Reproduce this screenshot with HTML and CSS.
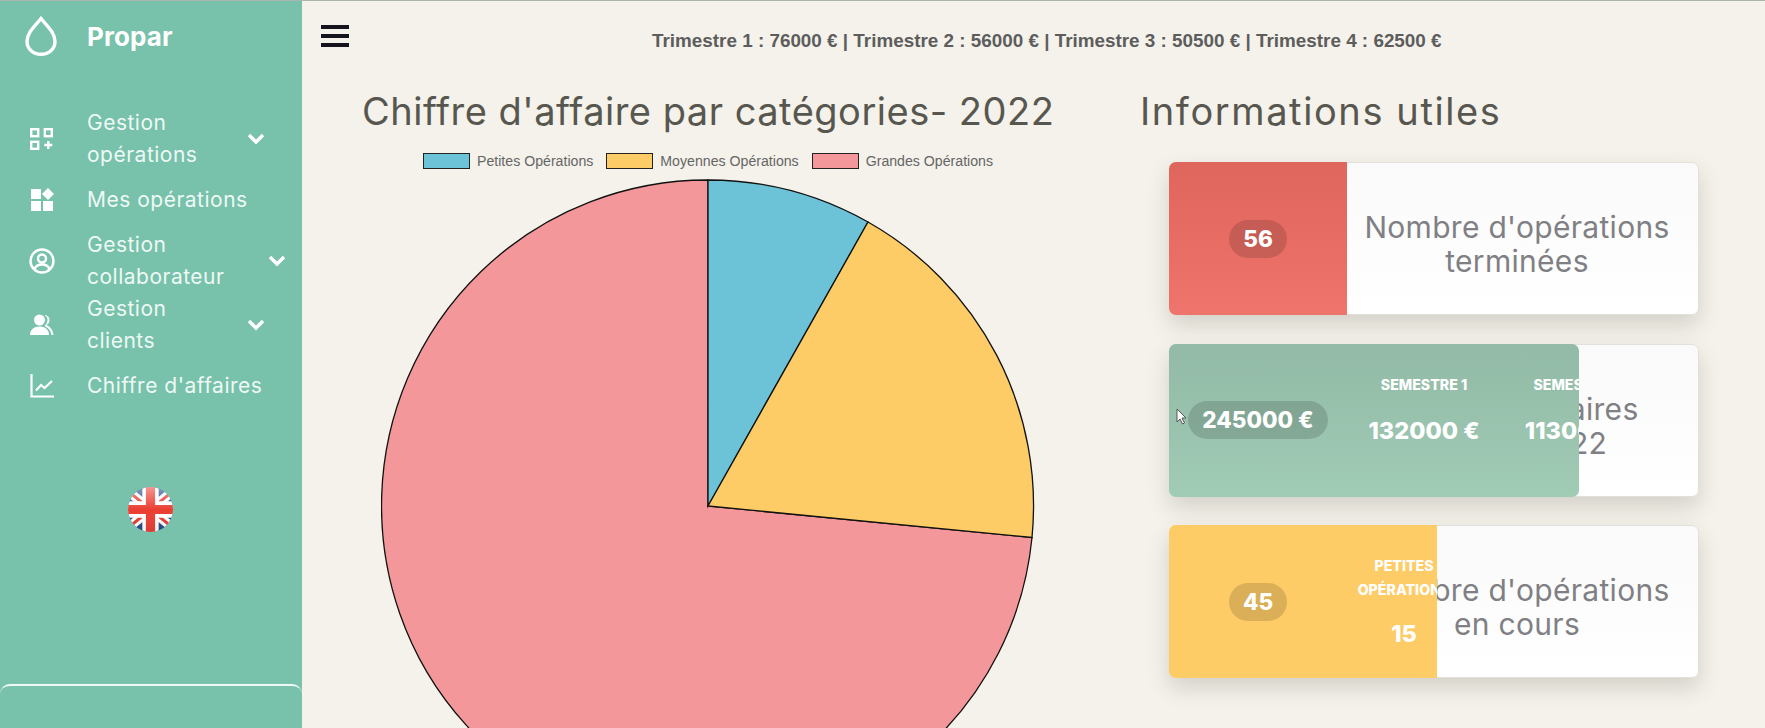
FILE: index.html
```
<!DOCTYPE html>
<html lang="fr">
<head>
<meta charset="utf-8">
<title>Propar</title>
<link rel="stylesheet" href="styles.css">
</head>
<body>
<div class="app">
  <aside class="sidebar">
    <div class="brand">
      <svg class="drop" viewBox="0 0 32 40" fill="none" stroke="#fff" stroke-width="3.4"><path d="M16 2.5C11 9 2 16 2 25.5 2 33 8.3 38.3 16 38.3S30 33 30 25.5C30 16 21 9 16 2.5Z"/></svg>
      <span class="brand-name">Propar</span>
    </div>
    <nav class="nav">
      <a class="item tall first">
        <span class="ico"><svg viewBox="0 0 23 22" width="23" height="22" fill="none" stroke="#fff" stroke-width="2.4"><rect x="1.2" y="1.2" width="7" height="7"/><rect x="14.8" y="1.2" width="7" height="7"/><rect x="1.2" y="13.8" width="7" height="7"/><path d="M18.300 13v8M14.300 17h8"/></svg></span>
        <span class="label">Gestion<br>opérations</span>
        <svg class="chev" viewBox="0 0 18 12" fill="none" stroke="#fff" stroke-width="3.4"><path d="M2 2l7 7 7-7"/></svg>
      </a>
      <a class="item short">
        <span class="ico"><svg viewBox="0 0 24 24" width="24" height="24" fill="#fff"><rect x="1" y="1" width="10" height="10"/><rect x="1" y="13" width="10" height="10"/><rect x="13" y="13" width="10" height="10"/><path d="M18 0l6 6-6 6-6-6z"/></svg></span>
        <span class="label">Mes opérations</span>
      </a>
      <a class="item tall collab">
        <span class="ico"><svg viewBox="0 0 26 26" width="26" height="26" fill="none" stroke="#fff" stroke-width="2.4"><circle cx="13" cy="13" r="11.5"/><circle cx="13" cy="10.5" r="4"/><path d="M5.5 21c1.5-3.5 4.5-4.5 7.5-4.5s6 1 7.5 4.5"/></svg></span>
        <span class="label">Gestion<br>collaborateur</span>
        <svg class="chev" viewBox="0 0 18 12" fill="none" stroke="#fff" stroke-width="3.4"><path d="M2 2l7 7 7-7"/></svg>
      </a>
      <a class="item tall">
        <span class="ico"><svg viewBox="0 0 24 22" width="24" height="22" fill="#fff"><circle cx="9.5" cy="6" r="5.5"/><path d="M0 21c0-5.5 4-8.500 9.500-8.500S19 15.500 19 21z"/><path d="M15 .8c3 .9 4.500 3 4.500 5.200S18.500 10 16.500 11c3.500 1.500 6.500 5 7 10h-2c-.6-4.500-3.500-7.500-7-9 1.800-1.600 3-3.500 3-6s-1-3.700-2.500-4.200z"/></svg></span>
        <span class="label">Gestion<br>clients</span>
        <svg class="chev" viewBox="0 0 18 12" fill="none" stroke="#fff" stroke-width="3.4"><path d="M2 2l7 7 7-7"/></svg>
      </a>
      <a class="item short">
        <span class="ico"><svg viewBox="0 0 24 24" width="24" height="24" fill="none" stroke="#fff" stroke-width="2.2"><path d="M1.500 0v22.500H24"/><path d="M6 16.500l5-5.500 3.500 3L22 7"/></svg></span>
        <span class="label">Chiffre d'affaires</span>
      </a>
    </nav>
    <div class="flag-wrap">
      <svg class="flag" viewBox="0 0 44 44">
        <defs>
          <clipPath id="flagclip"><circle cx="22" cy="22" r="22"/></clipPath>
          <linearGradient id="gloss" x1="0" y1="0" x2="0" y2="1">
            <stop offset="0" stop-color="#fff" stop-opacity=".45"/>
            <stop offset=".5" stop-color="#fff" stop-opacity="0"/>
            <stop offset="1" stop-color="#000" stop-opacity=".08"/>
          </linearGradient>
        </defs>
        <g clip-path="url(#flagclip)">
          <rect width="44" height="44" fill="#2b4a8c"/>
          <path d="M0 4L44 40M44 4L0 40" stroke="#fff" stroke-width="9"/>
          <path d="M0 4L22 22M44 40L22 22M44 4L22 22M0 40L22 22" stroke="#e53c32" stroke-width="3"/>
          <path d="M22 0V44M0 22H44" stroke="#fff" stroke-width="16"/>
          <path d="M22 0V44M0 22H44" stroke="#ea3f33" stroke-width="9"/>
          <rect width="44" height="44" fill="url(#gloss)"/>
        </g>
      </svg>
    </div>
    <div class="bottom-panel"></div>
  </aside>

  <main class="main">
    <header class="topbar">
      <div class="burger"><span></span><span></span><span></span></div>
      <p class="totals">Trimestre 1 : 76000 € | Trimestre 2 : 56000 € | Trimestre 3 : 50500 € | Trimestre 4 : 62500 €</p>
    </header>
    <div class="columns">
      <section class="chart-col">
        <h2 class="title">Chiffre d'affaire par catégories- 2022</h2>
        <ul class="legend">
          <li><i class="swatch blue"></i>Petites Opérations</li>
          <li><i class="swatch yellow"></i>Moyennes Opérations</li>
          <li><i class="swatch pink"></i>Grandes Opérations</li>
        </ul>
        <svg class="pie" width="654" height="654" viewBox="-327 -327 654 654" stroke="#111" stroke-width="1.3">
          <path fill="#f4979b" d="M0 0L324 31.500A326 326 0 1 1 0-326Z"/>
          <path fill="#6cc3d8" d="M0 0L0-326A326 326 0 0 1 160-284Z"/>
          <path fill="#fecc66" d="M0 0L160-284A326 326 0 0 1 324 31.500Z"/>
        </svg>
      </section>
      <section class="info-col">
        <h2 class="title title-wide">Informations utiles</h2>
        <div class="cards">
          <article class="card">
            <p class="card-text">Nombre d'opérations<br>terminées</p>
            <div class="panel red">
              <div class="cell"><span class="pill">56</span></div>
            </div>
          </article>
          <article class="card">
            <p class="card-text">Chiffre d'affaires<br>annuel 2022</p>
            <div class="panel green">
              <div class="cell"><span class="pill">245000 €</span></div>
              <div class="cell col"><span class="cap">SEMESTRE 1</span><span class="num">132000 €</span></div>
              <div class="cell col"><span class="cap">SEMESTRE 2</span><span class="num">113000 €</span></div>
            </div>
            <svg class="cursor" viewBox="0 0 11 17" width="11" height="17"><path d="M1 1v13l3-3 2.500 5 2-1-2.500-5h4z" fill="#fff" stroke="#555" stroke-width="1"/></svg>
          </article>
          <article class="card">
            <p class="card-text">Nombre d'opérations<br>en cours</p>
            <div class="panel yellow-panel">
              <div class="cell"><span class="pill">45</span></div>
              <div class="cell col narrow"><span class="cap">PETITES<br>OPÉRATIONS</span><span class="num">15</span></div>
            </div>
          </article>
        </div>
      </section>
    </div>
  </main>
</div>
</body>
</html>
```

FILE: styles.css
```
* { box-sizing: border-box; }
html, body { margin: 0; height: 100%; overflow: hidden; }
body { background: #f4f2ea; font-family: "Inter", "Noto Sans", sans-serif; border-top: 1px solid #a9b6ad; }
.app { display: flex; height: 727px; overflow: hidden; }

.sidebar { position: relative; flex: 0 0 302px; background: #78c1ab; color: #fff; }
.brand { display: flex; align-items: center; height: 70px; padding-left: 25px; }
.drop { width: 32px; height: 40px; margin-right: 30px; }
.brand-name { font-size: 26px; font-weight: 700; letter-spacing: .1px; }

.nav { display: flex; flex-direction: column; padding-top: 36px; }
.item { display: flex; align-items: center; color: #eef9f5; font-size: 21px; }
.tall { height: 63px; line-height: 31.500px; }
.short { height: 32px; line-height: 32px; margin: 14px 0; }
.collab { margin: -1px 0 1px; }
.ico { display: flex; justify-content: center; align-items: center; flex: 0 0 29px; margin-left: 27px; margin-right: 31px; }
.label { width: 160px; white-space: nowrap; letter-spacing: .5px; font-weight: 400; }
.chev { width: 18px; height: 12px; }
.collab .chev { margin-left: 21px; }

.flag-wrap { display: flex; justify-content: center; padding-top: 71px; padding-right: 2px; }
.flag { width: 45px; height: 45px; display: block; }
.bottom-panel { position: absolute; left: 0; right: 0; bottom: -20px; height: 64px; border-top: 2px solid #eef9f5; border-radius: 10px 10px 0 0; box-shadow: 0 0 0 1px rgba(255,255,255,.06); }

.main { flex: 1; min-width: 0; }
.topbar { display: flex; align-items: center; height: 86px; padding: 0 0 7px 19px; }
.burger { display: flex; flex-direction: column; gap: 5.500px; width: 28px; margin-top: -9px; }
.burger span { display: block; height: 3.500px; background: #15141c; }
.totals { margin: 0 0 0 303px; font: 700 18.860px "Liberation Sans", Arial, sans-serif; color: #5d5d5d; white-space: nowrap; }

.columns { display: flex; }
.chart-col { flex: 0 0 791px; padding-left: 60px; }
.info-col { flex: 1; min-width: 0; padding-left: 47px; }
.title { margin: 0; font-size: 38px; line-height: 48px; font-weight: 400; color: #58574f; letter-spacing: .5px; white-space: nowrap; font-family: "Inter", sans-serif; }
.title-wide { letter-spacing: 1.600px; }
.legend { display: flex; list-style: none; margin: 15px 0 0 61px; padding: 0; gap: 13px; height: 22px; align-items: center; font: 14.150px "Liberation Sans", Arial, sans-serif; color: #666; }
.legend li { display: flex; align-items: center; }
.swatch { display: block; width: 47px; height: 16px; margin-right: 7px; border: 1.500px solid #222; }
.blue { background: #6cc3d8; }
.yellow { background: #fecc66; }
.pink { background: #f4979b; }
.pie { display: block; margin: 7px 0 0 19px; }

.cards { display: flex; flex-direction: column; gap: 28.500px; margin: 27px 0 0 29px; width: 530px; }
.card { position: relative; height: 153px; border-radius: 7px; background: linear-gradient(#fafafa, #fff); border: 1px solid #e2e0da; box-shadow: 0 10px 22px rgba(60,60,50,.18); display: flex; justify-content: flex-end; }
.card-text { width: 353px; margin: 0; align-self: center; padding: 11px 9px 0 0; text-align: center; font-size: 30px; line-height: 34px; letter-spacing: .3px; color: #808084; white-space: nowrap; }
.panel { position: absolute; left: -1px; top: -1px; bottom: -1px; display: flex; overflow: hidden; color: #fff; font-weight: 800; border-radius: 7px 0 0 7px; }
.panel .cell { flex: 0 0 178px; display: flex; align-items: center; justify-content: center; }
.panel .col { flex: 0 0 154px; flex-direction: column; gap: 17px; padding-bottom: 19px; }
.panel .narrow { flex-basis: 114px; gap: 15px; padding: 2px 0 0; }
.red { width: 178px; background: linear-gradient(#df665c, #ef746c); }
.green { width: 410px; background: linear-gradient(#92baa6, #a0cbb5); border-radius: 7px; }
.yellow-panel { width: 268px; background: #fecc66; }
.pill { padding: 0 14px; height: 38px; line-height: 38px; border-radius: 19px; background: rgba(0,0,0,.14); font-size: 22.500px; white-space: nowrap; }
.cap { font-size: 14.200px; line-height: 24px; white-space: nowrap; text-align: center; }
.num { font-size: 23.500px; line-height: 34px; white-space: nowrap; }
.cursor { position: absolute; left: 6px; top: 63px; }
```
